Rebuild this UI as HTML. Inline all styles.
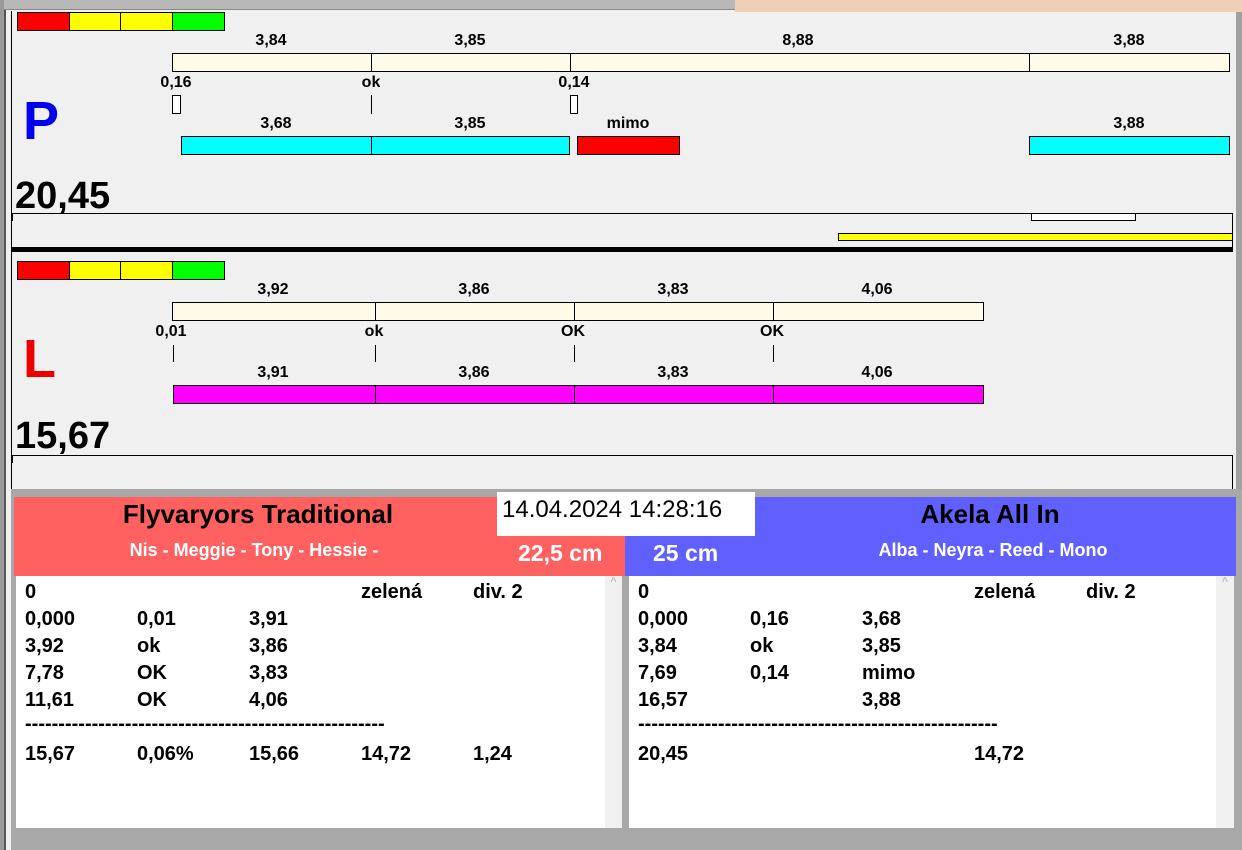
<!DOCTYPE html>
<html><head><meta charset="utf-8"><style>
body{margin:0;width:1242px;height:850px;background:#f0f0f0;position:relative;overflow:hidden;font-family:"Liberation Sans",Arial,sans-serif;font-weight:bold}
div{position:absolute;box-sizing:border-box}
.b{border:1px solid #000}
.l{font-size:16px;transform:translateX(-50%);white-space:nowrap}
.t{font-size:20px;white-space:nowrap}
</style></head><body>
<div style="left:0;top:0;width:735px;height:10px;background:#b8b8b8;border-bottom:1px solid #888"></div>
<div style="left:735px;top:0;width:507px;height:12px;background:#f0d0b4"></div>
<div style="left:0;top:0;width:4px;height:850px;background:#999"></div>
<div style="left:4px;top:10px;width:2px;height:840px;background:#555"></div>
<div style="left:1236px;top:12px;width:6px;height:838px;background:#a0a0a0"></div>
<div style="left:11px;top:11px;width:1px;height:480px;background:#000"></div>

<!-- P panel -->
<div class="b" style="left:17px;top:12px;width:53px;height:19px;background:#f00"></div>
<div class="b" style="left:69px;top:12px;width:52px;height:19px;background:#ff0"></div>
<div class="b" style="left:120px;top:12px;width:53px;height:19px;background:#ff0"></div>
<div class="b" style="left:172px;top:12px;width:53px;height:19px;background:#0f0"></div>

<div class="l" style="left:271px;top:32px">3,84</div>
<div class="l" style="left:470px;top:32px">3,85</div>
<div class="l" style="left:798px;top:32px">8,88</div>
<div class="l" style="left:1129px;top:32px">3,88</div>
<div class="b" style="left:172px;top:53px;width:200px;height:19px;background:#fffbe6"></div>
<div class="b" style="left:371px;top:53px;width:200px;height:19px;background:#fffbe6"></div>
<div class="b" style="left:570px;top:53px;width:460px;height:19px;background:#fffbe6"></div>
<div class="b" style="left:1029px;top:53px;width:201px;height:19px;background:#fffbe6"></div>
<div class="l" style="left:176px;top:74px">0,16</div>
<div class="l" style="left:371px;top:74px">ok</div>
<div class="l" style="left:574px;top:74px">0,14</div>
<div class="b" style="left:172px;top:95px;width:9px;height:19px;background:#fff"></div>
<div style="left:371px;top:95px;width:1px;height:19px;background:#000"></div>
<div class="b" style="left:570px;top:95px;width:8px;height:19px;background:#fff"></div>
<div class="l" style="left:276px;top:115px">3,68</div>
<div class="l" style="left:470px;top:115px">3,85</div>
<div class="l" style="left:628px;top:115px">mimo</div>
<div class="l" style="left:1129px;top:115px">3,88</div>
<div class="b" style="left:181px;top:136px;width:191px;height:19px;background:#0ff"></div>
<div class="b" style="left:371px;top:136px;width:199px;height:19px;background:#0ff"></div>
<div class="b" style="left:577px;top:136px;width:103px;height:19px;background:#f00"></div>
<div class="b" style="left:1029px;top:136px;width:201px;height:19px;background:#0ff"></div>
<div style="left:23px;top:90px;font-size:54px;color:#0000ee">P</div>
<div style="left:15px;top:175px;font-size:38px;color:#000">20,45</div>
<div style="left:12px;top:213px;width:1221px;height:35px;border-top:1px solid #000;border-right:1px solid #000"></div>
<div style="left:12px;top:213px;width:1px;height:8px;background:#000"></div>
<div class="b" style="left:1031px;top:213px;width:105px;height:8px;background:#fff"></div>
<div class="b" style="left:838px;top:233px;width:395px;height:8px;background:#ff0"></div>
<div style="left:12px;top:247px;width:1221px;height:5px;background:#000"></div>

<!-- L panel -->
<div class="b" style="left:17px;top:261px;width:53px;height:19px;background:#f00"></div>
<div class="b" style="left:69px;top:261px;width:52px;height:19px;background:#ff0"></div>
<div class="b" style="left:120px;top:261px;width:53px;height:19px;background:#ff0"></div>
<div class="b" style="left:172px;top:261px;width:53px;height:19px;background:#0f0"></div>
<div class="l" style="left:273px;top:281px">3,92</div>
<div class="l" style="left:474px;top:281px">3,86</div>
<div class="l" style="left:673px;top:281px">3,83</div>
<div class="l" style="left:877px;top:281px">4,06</div>
<div class="b" style="left:172px;top:302px;width:204px;height:19px;background:#fffbe6"></div>
<div class="b" style="left:375px;top:302px;width:200px;height:19px;background:#fffbe6"></div>
<div class="b" style="left:574px;top:302px;width:200px;height:19px;background:#fffbe6"></div>
<div class="b" style="left:773px;top:302px;width:211px;height:19px;background:#fffbe6"></div>
<div class="l" style="left:171px;top:323px">0,01</div>
<div class="l" style="left:374px;top:323px">ok</div>
<div class="l" style="left:573px;top:323px">OK</div>
<div class="l" style="left:772px;top:323px">OK</div>
<div style="left:173px;top:345px;width:1px;height:17px;background:#000"></div>
<div style="left:375px;top:345px;width:1px;height:17px;background:#000"></div>
<div style="left:574px;top:345px;width:1px;height:17px;background:#000"></div>
<div style="left:773px;top:345px;width:1px;height:17px;background:#000"></div>
<div class="l" style="left:273px;top:364px">3,91</div>
<div class="l" style="left:474px;top:364px">3,86</div>
<div class="l" style="left:673px;top:364px">3,83</div>
<div class="l" style="left:877px;top:364px">4,06</div>
<div class="b" style="left:173px;top:385px;width:203px;height:19px;background:#f0f"></div>
<div class="b" style="left:375px;top:385px;width:200px;height:19px;background:#f0f"></div>
<div class="b" style="left:574px;top:385px;width:200px;height:19px;background:#f0f"></div>
<div class="b" style="left:773px;top:385px;width:211px;height:19px;background:#f0f"></div>
<div style="left:23px;top:328px;font-size:54px;color:#ee0000">L</div>
<div style="left:15px;top:415px;font-size:38px;color:#000">15,67</div>
<div style="left:12px;top:455px;width:1221px;height:36px;border-top:1px solid #000;border-right:1px solid #000"></div>
<div style="left:12px;top:455px;width:1px;height:8px;background:#000"></div>

<!-- bottom -->
<div style="left:11px;top:489px;width:1231px;height:361px;background:#a8a8a8"></div>
<div style="left:14px;top:497px;width:611px;height:79px;background:#ff6060"></div>
<div style="left:625px;top:497px;width:611px;height:79px;background:#6060ff"></div>
<div style="left:497px;top:492px;width:258px;height:44px;background:#fff;font-weight:normal;font-size:24px;padding:4px 0 0 5px">14.04.2024 14:28:16</div>
<div style="left:14px;top:499px;width:488px;text-align:center;font-size:26px">Flyvaryors Traditional</div>
<div style="left:14px;top:540px;width:480px;text-align:center;font-size:18px;color:#fff">Nis - Meggie - Tony - Hessie -</div>
<div style="left:518px;top:540px;font-size:23px;color:#fff">22,5 cm</div>
<div style="left:653px;top:540px;font-size:23px;color:#fff">25 cm</div>
<div style="left:755px;top:499px;width:470px;text-align:center;font-size:26px">Akela All In</div>
<div style="left:755px;top:540px;width:476px;text-align:center;font-size:18px;color:#fff">Alba - Neyra - Reed - Mono</div>

<div style="left:16px;top:576px;width:589px;height:252px;background:#fff"></div>
<div style="left:605px;top:576px;width:17px;height:252px;background:#f0f0f0;color:#bbb;font-size:11px;text-align:center">^</div>
<div style="left:629px;top:576px;width:587px;height:252px;background:#fff"></div>
<div style="left:1216px;top:576px;width:18px;height:252px;background:#f0f0f0;color:#bbb;font-size:11px;text-align:center">^</div>

<div class="t" style="left:25px;top:581px">0</div><div class="t" style="left:361px;top:581px">zelená</div><div class="t" style="left:473px;top:581px">div. 2</div>
<div class="t" style="left:25px;top:608px">0,000</div><div class="t" style="left:137px;top:608px">0,01</div><div class="t" style="left:249px;top:608px">3,91</div>
<div class="t" style="left:25px;top:635px">3,92</div><div class="t" style="left:137px;top:635px">ok</div><div class="t" style="left:249px;top:635px">3,86</div>
<div class="t" style="left:25px;top:662px">7,78</div><div class="t" style="left:137px;top:662px">OK</div><div class="t" style="left:249px;top:662px">3,83</div>
<div class="t" style="left:25px;top:689px">11,61</div><div class="t" style="left:137px;top:689px">OK</div><div class="t" style="left:249px;top:689px">4,06</div>
<div class="t" style="left:25px;top:713px;width:360px;overflow:hidden">------------------------------------------------------</div>
<div class="t" style="left:25px;top:743px">15,67</div><div class="t" style="left:137px;top:743px">0,06%</div><div class="t" style="left:249px;top:743px">15,66</div><div class="t" style="left:361px;top:743px">14,72</div><div class="t" style="left:473px;top:743px">1,24</div>

<div class="t" style="left:638px;top:581px">0</div><div class="t" style="left:974px;top:581px">zelená</div><div class="t" style="left:1086px;top:581px">div. 2</div>
<div class="t" style="left:638px;top:608px">0,000</div><div class="t" style="left:750px;top:608px">0,16</div><div class="t" style="left:862px;top:608px">3,68</div>
<div class="t" style="left:638px;top:635px">3,84</div><div class="t" style="left:750px;top:635px">ok</div><div class="t" style="left:862px;top:635px">3,85</div>
<div class="t" style="left:638px;top:662px">7,69</div><div class="t" style="left:750px;top:662px">0,14</div><div class="t" style="left:862px;top:662px">mimo</div>
<div class="t" style="left:638px;top:689px">16,57</div><div class="t" style="left:862px;top:689px">3,88</div>
<div class="t" style="left:638px;top:713px;width:360px;overflow:hidden">------------------------------------------------------</div>
<div class="t" style="left:638px;top:743px">20,45</div><div class="t" style="left:974px;top:743px">14,72</div>
</body></html>
